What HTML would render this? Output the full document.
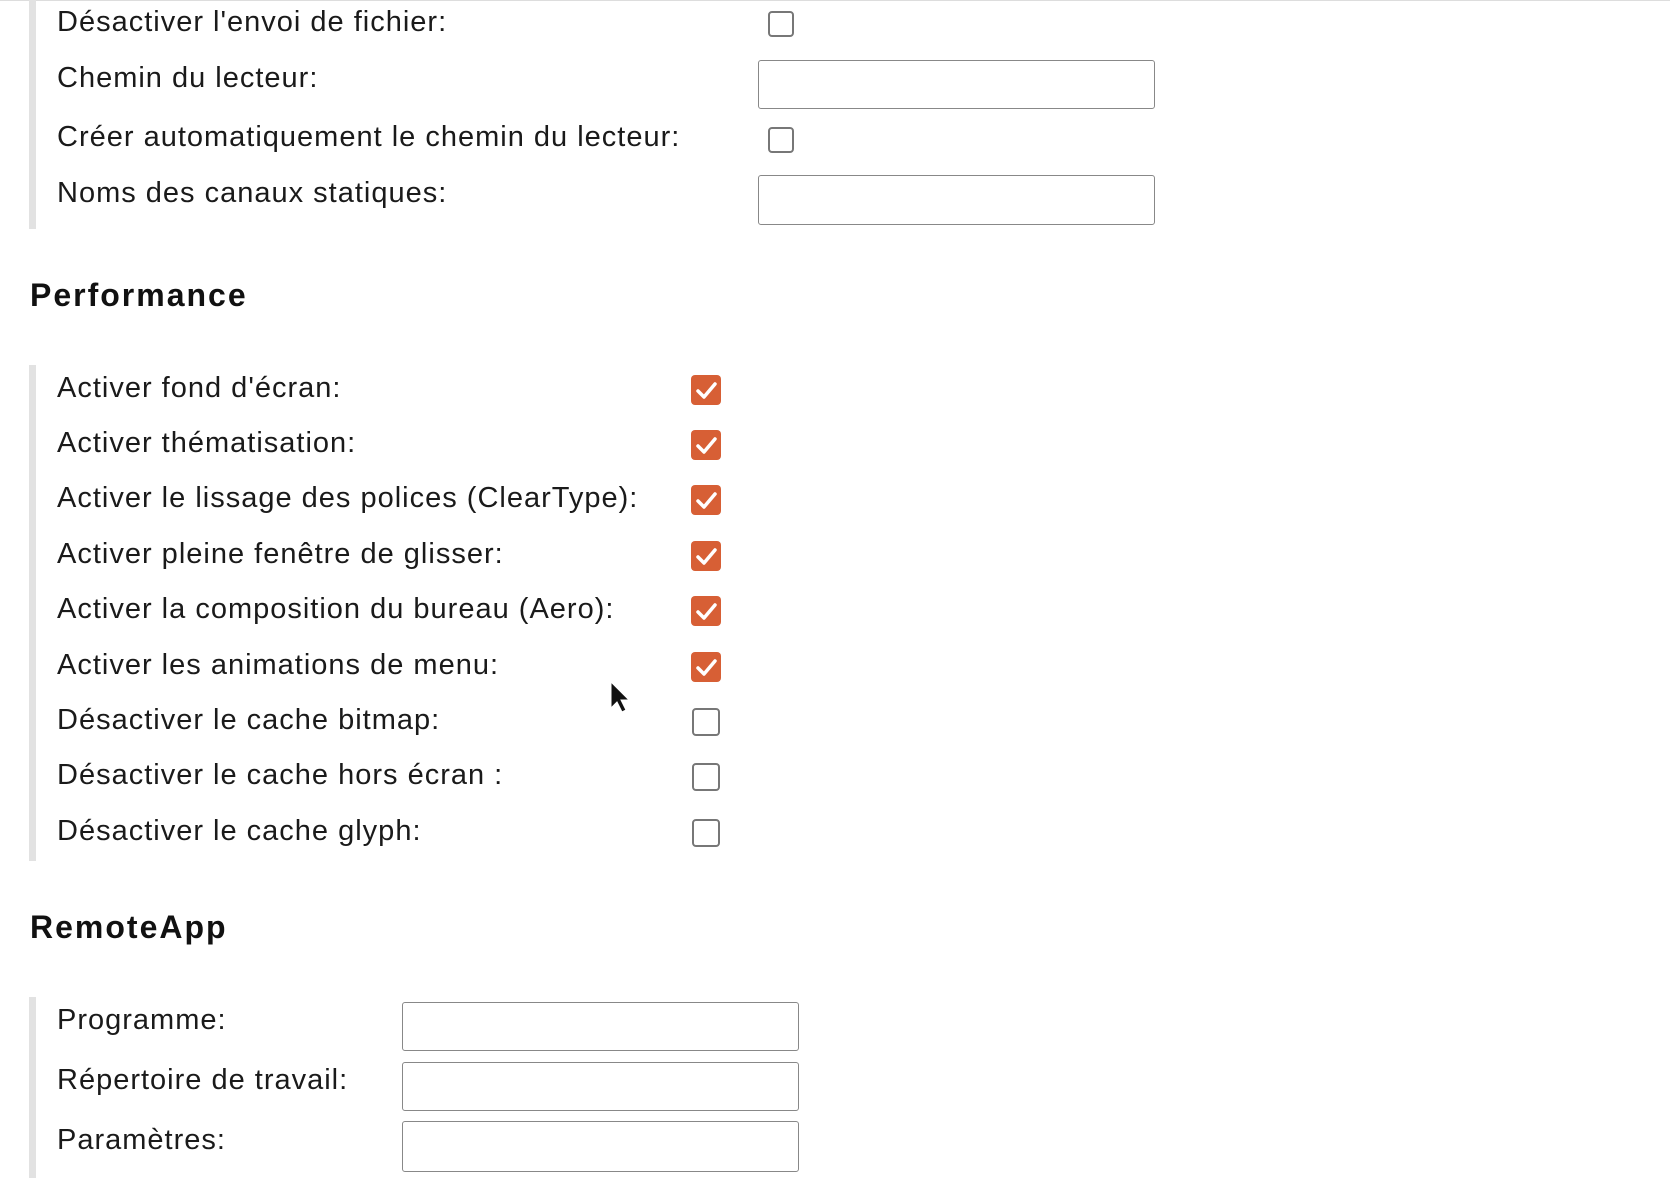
<!DOCTYPE html>
<html><head><meta charset="utf-8"><style>
body{margin:0;width:1670px;height:1200px;background:#fff;position:relative;overflow:hidden;font-family:"Liberation Sans",sans-serif;color:#1a1a1a}
.t{position:absolute;left:57px;font-size:29px;line-height:30px;white-space:nowrap;letter-spacing:1px}
.h{position:absolute;left:30px;font-size:32px;font-weight:bold;line-height:36px;color:#111;letter-spacing:2px}
.bar{position:absolute;left:29px;width:7px;background:#e2e2e2}
.cb{position:absolute;width:26px;height:26px;border:2px solid #777;border-radius:4px;box-sizing:border-box;background:#fff}
.in{position:absolute;border:1.5px solid #888;border-radius:3px;box-sizing:border-box;background:#fff}
</style></head><body>
<div style="position:absolute;left:0;top:0;width:1670px;height:1px;background:#ddd"></div>
<div class="bar" style="top:0;height:229px"></div>
<div class="t" style="top:7px">Désactiver l'envoi de fichier:</div>
<div class="cb" style="left:768px;top:11px"></div>
<div class="t" style="top:63px">Chemin du lecteur:</div>
<div class="in" style="left:758px;top:60px;width:397px;height:49px"></div>
<div class="t" style="top:122px">Créer automatiquement le chemin du lecteur:</div>
<div class="cb" style="left:768px;top:127px"></div>
<div class="t" style="top:178px">Noms des canaux statiques:</div>
<div class="in" style="left:758px;top:175px;width:397px;height:50px"></div>

<div class="h" style="top:277px">Performance</div>
<div class="bar" style="top:365px;height:496px"></div>
<div class="t" style="top:373px">Activer fond d'écran:</div>
<div class="t" style="top:428px">Activer thématisation:</div>
<div class="t" style="top:483px">Activer le lissage des polices (ClearType):</div>
<div class="t" style="top:539px">Activer pleine fenêtre de glisser:</div>
<div class="t" style="top:594px">Activer la composition du bureau (Aero):</div>
<div class="t" style="top:650px">Activer les animations de menu:</div>
<div class="t" style="top:705px">Désactiver le cache bitmap:</div>
<div class="t" style="top:760px">Désactiver le cache hors écran :</div>
<div class="t" style="top:816px">Désactiver le cache glyph:</div>
<svg style="position:absolute;left:0;top:0" width="1670" height="1200">
<g fill="#d75f35">
<rect x="691" y="375" width="30" height="30" rx="4"/>
<rect x="691" y="430" width="30" height="30" rx="4"/>
<rect x="691" y="485" width="30" height="30" rx="4"/>
<rect x="691" y="541" width="30" height="30" rx="4"/>
<rect x="691" y="596" width="30" height="30" rx="4"/>
<rect x="691" y="652" width="30" height="30" rx="4"/>
</g>
<g fill="none" stroke="#fff" stroke-width="3.5" stroke-linecap="round" stroke-linejoin="round">
<path d="M698 391l6 6 11-13"/>
<path d="M698 446l6 6 11-13"/>
<path d="M698 501l6 6 11-13"/>
<path d="M698 557l6 6 11-13"/>
<path d="M698 612l6 6 11-13"/>
<path d="M698 668l6 6 11-13"/>
</g>
<path d="M611 682v26l6-6 5 10 4-2-5-10h8z" fill="#111" stroke="#fff" stroke-width="1"/>
</svg>
<div class="cb" style="left:692px;top:708px;width:28px;height:28px"></div>
<div class="cb" style="left:692px;top:763px;width:28px;height:28px"></div>
<div class="cb" style="left:692px;top:819px;width:28px;height:28px"></div>

<div class="h" style="top:909px">RemoteApp</div>
<div class="bar" style="top:997px;height:181px"></div>
<div class="t" style="top:1005px">Programme:</div>
<div class="t" style="top:1065px">Répertoire de travail:</div>
<div class="t" style="top:1125px">Paramètres:</div>
<div class="in" style="left:402px;top:1002px;width:397px;height:49px"></div>
<div class="in" style="left:402px;top:1062px;width:397px;height:49px"></div>
<div class="in" style="left:402px;top:1121px;width:397px;height:51px"></div>
</body></html>
